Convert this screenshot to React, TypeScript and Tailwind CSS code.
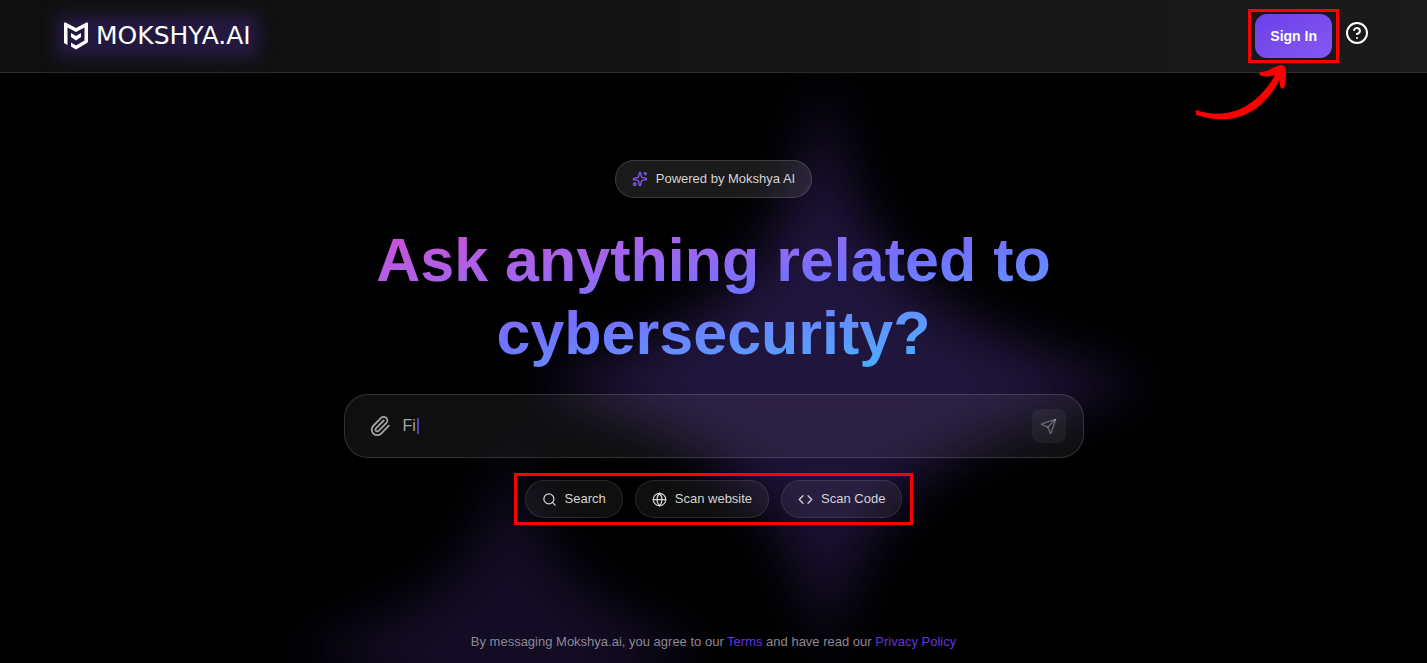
import { CircleHelp, Code, Globe, Paperclip, Search, Send, Sparkles } from "lucide-react";

const actions = [
  { label: "Search", Icon: Search },
  { label: "Scan website", Icon: Globe },
  { label: "Scan Code", Icon: Code },
];

function Backdrop() {
  return (
    <svg
      className="pointer-events-none absolute top-0 left-1/2 h-[663px] w-[1427px] -translate-x-1/2"
      viewBox="0 0 1427 663"
      aria-hidden="true"
    >
      <defs>
        <filter id="soft" x="-30%" y="-30%" width="160%" height="160%" colorInterpolationFilters="sRGB">
          <feGaussianBlur stdDeviation="26" />
        </filter>
        <linearGradient id="glow" x1="0" y1="0" x2="0" y2="1">
          <stop offset="0" stopColor="#1d1238" />
          <stop offset="0.5" stopColor="#20153c" />
          <stop offset="1" stopColor="#160e2c" />
        </linearGradient>
      </defs>
      <g filter="url(#soft)">
        <path
          d="M824 70 C848 240 890 320 1150 386 C920 440 866 500 826 660 C784 500 740 440 530 386 C750 320 795 240 824 70Z"
          fill="url(#glow)"
        />
        <path
          d="M512 420 C530 560 570 600 710 650 C570 690 535 740 512 880 C490 740 440 690 290 650 C440 610 494 560 512 420Z"
          fill="#130c25"
        />
      </g>
    </svg>
  );
}

function Logo() {
  return (
    <a
      href="#"
      className="flex items-center gap-2 bg-[#281c4b]/80 text-white shadow-[0_0_16px_8px_rgba(40,28,75,0.8)]"
    >
      <svg width="24" height="28" viewBox="0 0 24 28" fill="currentColor" aria-hidden="true">
        <path d="M1.5 0.5 L12 6 L22.5 0.5 Q24 0 24 1.5 V19 Q24 20.3 23 21 L12 27.5 L7 24.5 V20.5 L12 23.5 L20.5 18.5 V5.5 L12 10 L3.5 5.5 V23 L0 21 V1.5 Q0 0 1.5 0.5Z" />
        <path d="M7 11 L12 14 L17 11 V15 L12 18.5 L7 15Z" />
      </svg>
      <span className="font-['DejaVu_Sans'] text-[25px] leading-7">MOKSHYA.AI</span>
    </a>
  );
}

function Header() {
  return (
    <header className="relative flex items-center justify-between border-b border-[#2c2c2c] bg-linear-to-r from-[#0f0f0f] to-[#1a1a1a] py-[9px] pr-[58px] pl-16">
      <Logo />
      <div className="relative flex items-center gap-1.5">
        <div className="border-[3px] border-[#fe0000] px-1 py-0.5">
          <button className="block h-11 rounded-xl bg-linear-to-br from-[#6b3fe8] to-[#8657f3] px-[15px] text-sm font-bold text-white">
            Sign In
          </button>
        </div>
        <button aria-label="Help" className="pb-1.5 text-white">
          <CircleHelp size={24} />
        </button>
      </div>
      <svg
        className="pointer-events-none absolute top-[64px] right-[140px] h-14 w-[92px]"
        viewBox="0 0 92 56"
        fill="#fe0000"
        aria-hidden="true"
      >
        <path d="M1 46 C36 58 64 40 80 11 C75 13 69 13 65 11 Q63 9 66 8 C74 7 80 2 86 1 Q91 1 91 7 C91 14 91 19 89 24 Q86 26 85 22 L85 15 C66 52 36 62 1 51Z" />
      </svg>
    </header>
  );
}

export default function App() {
  return (
    <div className="relative min-h-screen overflow-hidden bg-black font-['Liberation_Sans',sans-serif]">
      <Backdrop />
      <Header />
      <main className="relative flex flex-col items-center px-6 pt-[87px]">
        <div className="flex h-[38px] items-center gap-2 rounded-full border border-white/15 bg-white/10 px-4 text-[13px] text-[#d4d4d4]">
          <Sparkles size={16} className="text-[#8257f5]" />
          Powered by Mokshya AI
        </div>
        <h1 className="mt-[26px] max-w-[740px] bg-linear-to-br from-[#d845d0] via-[#7270ff] to-[#00c4ff] bg-clip-text text-center text-[61px] leading-[73px] font-bold text-transparent">
          Ask anything related to cybersecurity?
        </h1>
        <form
          className="mt-6 flex h-16 w-full max-w-[740px] items-center rounded-3xl border border-white/15 bg-white/6 pr-[17px] pl-6"
          onSubmit={(e) => e.preventDefault()}
        >
          <button type="button" aria-label="Attach file" className="text-[#a3a3a3]">
            <Paperclip size={22} />
          </button>
          <label className="relative ml-3 flex flex-1 items-center text-base">
            <input
              aria-label="Message"
              defaultValue="Fi"
              className="w-full bg-transparent text-[#a3a3a3] outline-none"
            />
            <span className="absolute left-[14px] h-4 w-0.5 bg-[#5a3bb8]" />
          </label>
          <button
            type="submit"
            aria-label="Send"
            className="flex size-[34px] items-center justify-center rounded-lg bg-white/5 text-white/30"
          >
            <Send size={17} strokeWidth={2} />
          </button>
        </form>
        <div className="mt-[15px] flex gap-3 border-[3px] border-[#fe0000] px-2 py-1">
          {actions.map(({ label, Icon }) => (
            <button
              key={label}
              className="flex h-[38px] items-center gap-2 rounded-full border border-white/10 bg-white/6 px-4 text-[13px] text-[#d4d4d4]"
            >
              <Icon size={15} />
              {label}
            </button>
          ))}
        </div>
        <p className="mt-[107px] pb-3 text-[13px] text-[#8c8894]">
          By messaging Mokshya.ai, you agree to our{" "}
          <a href="#" className="text-[#6237d6]">Terms</a> and have read our{" "}
          <a href="#" className="text-[#6237d6]">Privacy Policy</a>
        </p>
      </main>
    </div>
  );
}
